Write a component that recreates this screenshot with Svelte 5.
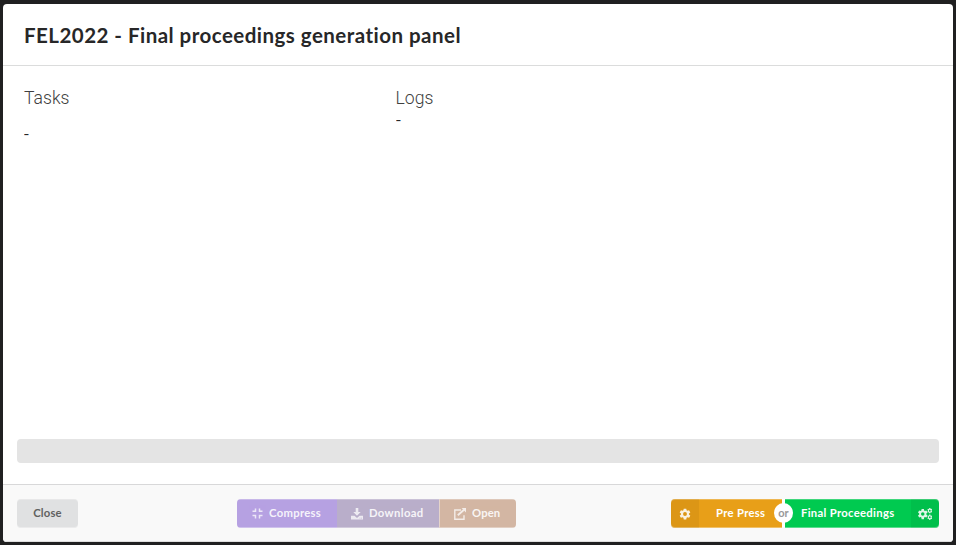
<script>
  const gear = 'M6.3 0h3.4l.4 2.3 1.1.6 2.2-.8 1.7 2.9-1.8 1.5v1.4l1.8 1.5-1.7 2.9-2.2-.8-1.1.7-.4 2.3H6.3l-.4-2.3-1.1-.7-2.2.8L.9 9.4l1.8-1.5V6.5L.9 5l1.7-2.9 2.2.8 1.1-.6zM8 4.6a2.6 2.6 0 1 0 0 5.2 2.6 2.6 0 0 0 0-5.2z';
</script>

<main class="page">
  <section class="modal">
    <header><h1>FEL2022 - Final proceedings generation panel</h1></header>
    <div class="content">
      <div class="columns">
        <div class="tasks"><h2>Tasks</h2><p>-</p></div>
        <div class="logs"><h2>Logs</h2><p>-</p></div>
      </div>
      <div class="progress"></div>
    </div>
    <footer>
      <button class="close"><span>Close</span></button>
      <div class="group">
        <button class="compress" disabled>
          <svg width="11" height="11" viewBox="0 0 11 11" fill="none" stroke="#fff" stroke-width="1.5"><path d="M.5 3.3h3V.5M7.5.5v2.8h3M.5 7.5h3v3M7.5 10.5v-3h3" /></svg>
          <span>Compress</span>
        </button>
        <button class="download" disabled>
          <svg width="12" height="12" viewBox="0 0 12 12" fill="#fff"><path d="M4.7 0h2.6v4h2.4L6 7.8 2.3 4h2.4z" /><path fill-rule="evenodd" d="M0 7.8h3.5L6 10l2.5-2.2H12v3.7H0zM8.6 9.7v.9h.8v-.9zm1.6 0v.9h.8v-.9z" /></svg>
          <span>Download</span>
        </button>
        <button class="open" disabled>
          <svg width="12" height="12" viewBox="0 0 12 12"><path d="M7 2H.8v9.2H10V7.3" fill="none" stroke="#fff" stroke-width="1.4" /><path d="M3.8 7.2 10 1.7" stroke="#fff" stroke-width="1.9" /><path d="M7.6 0H12v4.4z" fill="#fff" /></svg>
          <span>Open</span>
        </button>
      </div>
      <div class="choices">
        <button class="prepress">
          <i><svg width="12" height="12" viewBox="0 0 16 14.3" fill="#fff"><path fill-rule="evenodd" d={gear} /></svg></i>
          <span>Pre Press</span>
        </button>
        <div class="or"><b>or</b></div>
        <button class="final">
          <span>Final Proceedings</span>
          <i><svg width="14" height="12" viewBox="0 0 14 12" fill="#fff" fill-rule="evenodd"><path transform="translate(-.6 1) scale(.67 .7)" d={gear} /><path transform="translate(9.1 0) scale(.34 .37)" d={gear} /><path transform="translate(9.1 6.6) scale(.34 .37)" d={gear} /></svg></i>
        </button>
      </div>
    </footer>
  </section>
</main>

<style>
  :global(body) { margin: 0; background: #202021; }
  .page { box-sizing: border-box; width: 956px; height: 545px; padding: 4px 3px 3px; background: #202021; overflow: hidden; }
  .modal { height: 538px; display: flex; flex-direction: column; background: #fff; border-radius: 4px; overflow: hidden; }
  header { box-sizing: border-box; height: 62px; padding: 16px 21px; border-bottom: 1px solid #dbdcdc; }
  h1 { margin: 0; font: 700 20.5px/30px "Lato", sans-serif; color: #272728; letter-spacing: .47px; white-space: nowrap; }
  .content { box-sizing: border-box; flex: 1; display: flex; flex-direction: column; padding: 20px 14px 21px; }
  .columns { flex: 1; display: flex; padding-left: 7px; }
  .tasks { width: 371.5px; }
  h2 { margin: 0; font: 300 17.6px/25px Roboto, sans-serif; color: #3f3f3f; }
  p { margin: 0; font: 400 15px/20px Roboto, sans-serif; color: #272728; transform: scaleX(1.15); transform-origin: left; }
  .tasks p { margin-top: 13px; }
  .logs p { margin-top: -1px; }
  .progress { height: 24px; background: #e4e4e4; border-radius: 4px; }
  footer { box-sizing: border-box; height: 58px; padding: 14px 14px 14px; display: flex; background: #f9f9f9; border-top: 1px solid #d8d8d9; border-bottom: 1px solid #dedede; }
  button { box-sizing: border-box; height: 29px; border: 0; padding: 0; margin: 0; display: flex; align-items: center; color: #fff; font: 700 11.3px/28px "Lato", sans-serif; white-space: nowrap; box-shadow: inset 0 1px rgba(255, 255, 255, .25), inset 0 -1px rgba(255, 255, 255, .35); }
  button span { height: 29px; line-height: 27px; }
  button svg { display: block; flex: none; }
  .close { width: 61px; justify-content: center; background: #e0e1e2; color: #606161; border-radius: 4px; letter-spacing: .15px; }
  .group { display: flex; margin-left: 159px; width: 279px; height: 29px; border-radius: 4px; overflow: hidden; }
  .group svg { opacity: .75; }
  .group span { opacity: .87; }
  .compress { width: 100px; padding-left: 15px; gap: 6px; background: #b6a1e2; letter-spacing: .3px; }
  .download { width: 102px; padding-left: 14px; gap: 6px; background: #b9aeca; letter-spacing: .35px; }
  .open { width: 77px; padding-left: 14px; gap: 6px; background: #d3b6a3; border-left: 1px solid #e5d4ca; letter-spacing: .1px; }
  .choices { display: flex; margin-left: auto; width: 268px; }
  .prepress { width: 111px; background: #e89f18; border-radius: 4px 0 0 4px; letter-spacing: .3px; }
  .choices i { height: 29px; width: 28px; display: flex; align-items: center; justify-content: center; background: rgba(0, 0, 0, .05); }
  .choices i svg { opacity: .87; }
  .prepress i { border-radius: 4px 0 0 4px; }
  .prepress span { padding-left: 17px; }
  .or { width: 3px; position: relative; background: #fff; }
  .or b { position: absolute; z-index: 1; left: -8px; top: 4px; width: 19px; height: 20px; border-radius: 50%; background: #fff; color: #999; text-align: center; font: 700 11px/19px "Lato", sans-serif; }
  .final { width: 154px; justify-content: space-between; background: #00ca50; border-radius: 0 4px 4px 0; letter-spacing: .3px; }
  .final span { padding-left: 16px; }
  .final i { border-radius: 0 4px 4px 0; }
</style>
